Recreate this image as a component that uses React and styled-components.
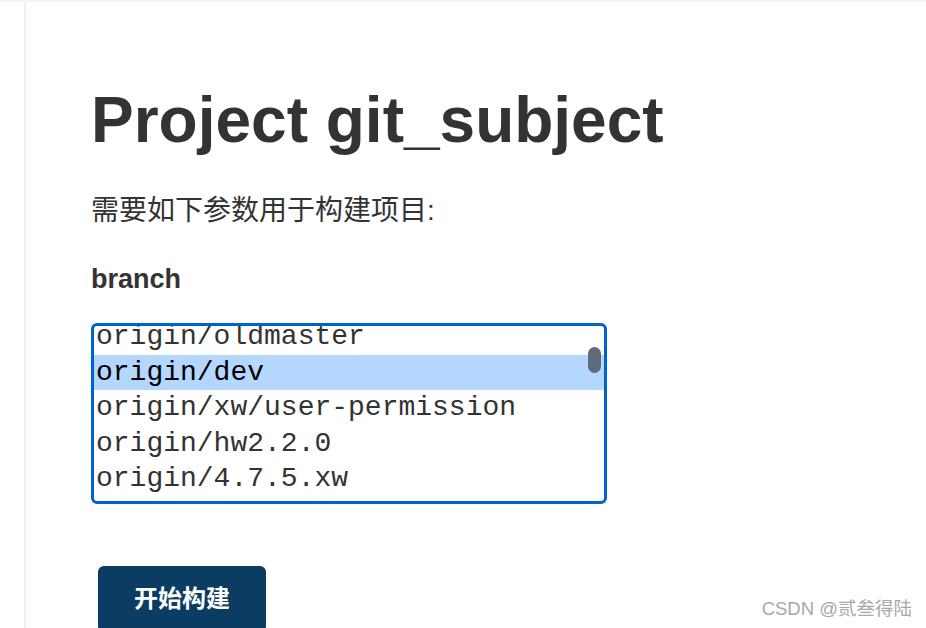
import React, { useLayoutEffect, useRef } from 'react'
import styled, { createGlobalStyle } from 'styled-components'

const GlobalStyle = createGlobalStyle`
  html, body {
    margin: 0;
    padding: 0;
    background: #fff;
  }
  body {
    font-family: "Liberation Sans", Arial, "Noto Sans CJK SC", sans-serif;
    color: #333;
  }
`

const branches = [
  'origin/master',
  'origin/oldmaster',
  'origin/dev',
  'origin/xw/user-permission',
  'origin/hw2.2.0',
  'origin/4.7.5.xw',
  'origin/release',
  'origin/feature/login',
]

const App = () => {
  const listRef = useRef(null)

  useLayoutEffect(() => {
    // the list is shown scrolled a little down, like in the screenshot
    if (listRef.current) listRef.current.scrollTop = 42
  }, [])

  return (
    <Page>
      <GlobalStyle />
      <Side />
      <Main>
        <Title>Project git_subject</Title>
        <Lead>需要如下参数用于构建项目:</Lead>
        <Label>branch</Label>
        <ListBox>
          <List ref={listRef}>
            {branches.map((b) => (
              <Option key={b} selected={b === 'origin/dev'}>{b}</Option>
            ))}
          </List>
          <Thumb />
        </ListBox>
        <BuildButton>开始构建</BuildButton>
      </Main>
      <Watermark>CSDN @贰叁得陆</Watermark>
    </Page>
  )
}

export default App

const Page = styled.div`
  position: relative;
  display: flex;
  height: 100vh;
  overflow: hidden;
  border-top: 2px solid #f3f3f3;
  box-sizing: border-box;
`

const Side = styled.div`
  width: 24px;
  flex-shrink: 0;
  border-right: 2px solid #efefef;
`

const Main = styled.div`
  flex: 1;
  padding-left: 65px;
  display: flex;
  flex-direction: column;
  align-items: flex-start;
  & > * {
    flex-shrink: 0;
  }
`

const Title = styled.h1`
  margin: 86px 0 0 0;
  font-size: 64px;
  line-height: 1;
  font-weight: 700;
  color: #333;
`

const Lead = styled.p`
  margin: 42px 0 0 0;
  font-family: "Liberation Sans", "Noto Sans CJK SC", sans-serif;
  font-size: 28px;
  line-height: 1.2;
  color: #333;
`

const Label = styled.div`
  margin-top: 35px;
  font-size: 27px;
  font-weight: 700;
  line-height: 1.2;
  color: #333;
`

const ListBox = styled.div`
  position: relative;
  margin-top: 28px;
  width: 516px;
  height: 181px;
  box-sizing: border-box;
  border: 3px solid #0062d1;
  border-radius: 6px;
  overflow: hidden;
  background: #fff;
`

const List = styled.div`
  height: 100%;
  overflow-y: scroll;
  scrollbar-width: none;
  &::-webkit-scrollbar {
    display: none;
  }
`

const Option = styled.div`
  height: 35.5px;
  line-height: 35.5px;
  padding-left: 2px;
  font-family: "Liberation Mono", "Courier New", monospace;
  font-size: 28px;
  white-space: nowrap;
  color: ${(p) => (p.selected ? '#000' : '#333')};
  background: ${(p) => (p.selected ? '#b3d7ff' : 'transparent')};
`

const Thumb = styled.div`
  position: absolute;
  top: 21px;
  right: 3px;
  width: 13px;
  height: 26px;
  border-radius: 7px;
  background: #5e6b7c;
`

const BuildButton = styled.button`
  margin: 62px 0 0 7px;
  width: 168px;
  height: 66px;
  padding: 0 0 4px 0;
  border: none;
  border-radius: 6px;
  background: #0b3d62;
  color: #fff;
  font-family: "Noto Sans CJK SC", sans-serif;
  font-size: 24px;
  font-weight: 700;
  cursor: pointer;
`

const Watermark = styled.div`
  position: absolute;
  right: 14px;
  bottom: 8px;
  font-family: "Liberation Sans", "Noto Sans CJK SC", sans-serif;
  font-size: 18.5px;
  color: #a8a8a8;
`
